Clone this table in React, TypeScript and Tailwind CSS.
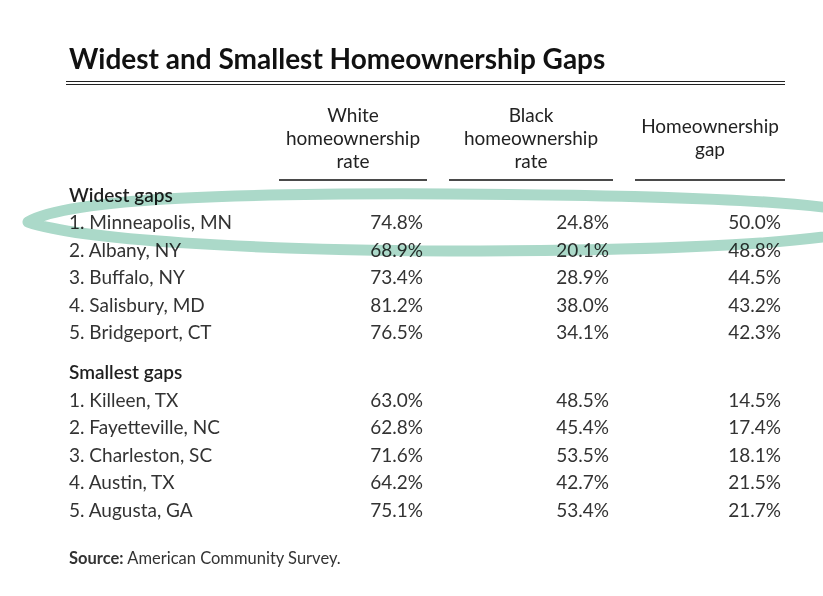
import React from "react";

type Row = [string, string, string, string];

const widest: Row[] = [
  ["1. Minneapolis, MN", "74.8%", "24.8%", "50.0%"],
  ["2. Albany, NY", "68.9%", "20.1%", "48.8%"],
  ["3. Buffalo, NY", "73.4%", "28.9%", "44.5%"],
  ["4. Salisbury, MD", "81.2%", "38.0%", "43.2%"],
  ["5. Bridgeport, CT", "76.5%", "34.1%", "42.3%"],
];

const smallest: Row[] = [
  ["1. Killeen, TX", "63.0%", "48.5%", "14.5%"],
  ["2. Fayetteville, NC", "62.8%", "45.4%", "17.4%"],
  ["3. Charleston, SC", "71.6%", "53.5%", "18.1%"],
  ["4. Austin, TX", "64.2%", "42.7%", "21.5%"],
  ["5. Augusta, GA", "75.1%", "53.4%", "21.7%"],
];

const cols = "grid grid-cols-[191px_148px_164px_150px] gap-x-[22px]";

const DataRow = ({ row }: { row: Row }) => (
  <div className={`${cols} h-[27.5px] items-center leading-[27.5px]`}>
    <div className="pl-[3px] whitespace-nowrap">{row[0]}</div>
    <div className="pr-[4px] text-right">{row[1]}</div>
    <div className="pr-[4px] text-right">{row[2]}</div>
    <div className="pr-[4px] text-right">{row[3]}</div>
  </div>
);

const Group = ({ label, rows }: { label: string; rows: Row[] }) => (
  <div>
    <div className="h-[27.5px] pl-[3px] font-semibold leading-[27.5px] text-[#1f1f1f]">
      {label}
    </div>
    {rows.map((r) => (
      <DataRow key={r[0]} row={r} />
    ))}
  </div>
);

const Header = ({ lines }: { lines: string[] }) => (
  <div className="flex flex-col">
    <div className="flex h-[84px] flex-col items-center justify-center text-center leading-[23px] text-[#222]">
      {lines.map((l) => (
        <span key={l}>{l}</span>
      ))}
    </div>
    <div className="h-[1.5px] bg-[#4a4a4a]" />
  </div>
);

export default function App() {
  return (
    <div className="relative h-[596px] w-[823px] overflow-hidden bg-white font-['Lato','Liberation_Sans',sans-serif] text-[19px] text-[#333]">
      <div className="pl-[66px] pt-[41px]">
        <h1 className="pl-[3px] text-[28px] font-bold leading-[34px] text-[#111]">
          Widest and Smallest Homeownership Gaps
        </h1>
        <div className="mt-[6px] w-[719px] border-y-[1.5px] border-[#222] py-[1px]" />

        <div className={`${cols} mt-[10px]`}>
          <div />
          <Header lines={["White", "homeownership", "rate"]} />
          <Header lines={["Black", "homeownership", "rate"]} />
          <Header lines={["Homeownership", "gap"]} />
        </div>

        <Group label="Widest gaps" rows={widest} />
        <div className="h-[12.5px]" />
        <Group label="Smallest gaps" rows={smallest} />

        <p className="mt-[23px] pl-[3px] text-[16.5px] text-[#333]">
          <span className="font-bold">Source:</span> American Community Survey.
        </p>
      </div>

      <svg
        className="pointer-events-none absolute left-0 top-0 mix-blend-multiply"
        width="823"
        height="596"
        viewBox="0 0 823 596"
      >
        <path
          d="M 28 222 C 70 197, 250 193, 450 194 C 650 195, 860 200, 880 222 C 860 244, 650 251, 450 251 C 250 250, 80 240, 28 222 Z"
          fill="none"
          stroke="#abd9c9"
          strokeWidth="11"
          strokeLinejoin="round"
        />
      </svg>
    </div>
  );
}
